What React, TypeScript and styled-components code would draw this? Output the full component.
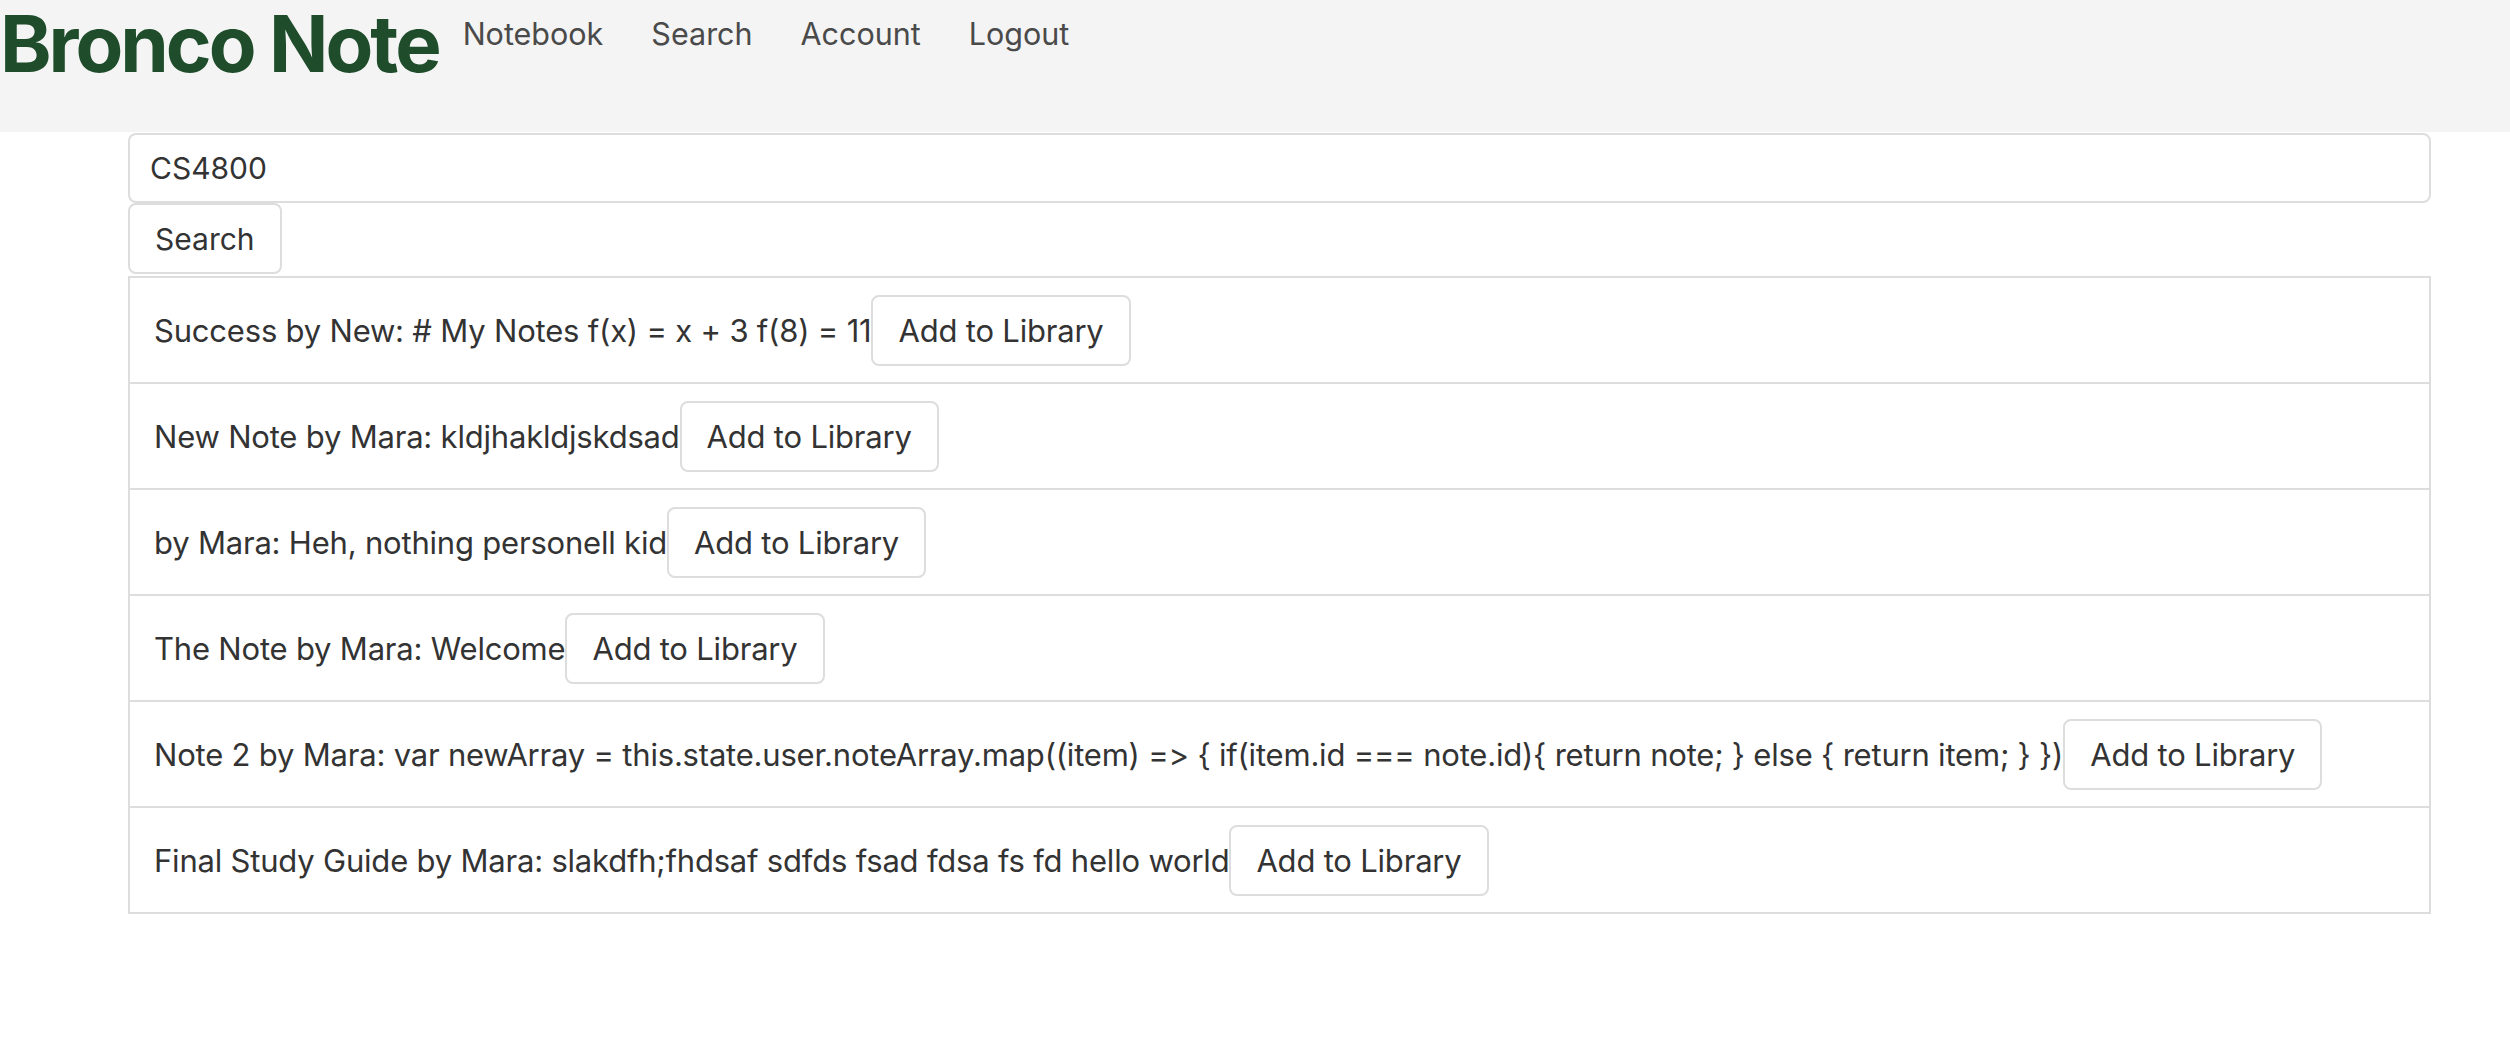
import React from "react";
import styled, { createGlobalStyle } from "styled-components";

const GlobalStyle = createGlobalStyle`
  html, body { margin: 0; padding: 0; background: #ffffff; }
  body {
    font-family: Inter, "Noto Sans", "Liberation Sans", sans-serif;
    font-feature-settings: "calt" 0, "liga" 0;
    font-variant-ligatures: none;
    color: #333333;
  }
  * { box-sizing: border-box; }
`;

const Header = styled.header`
  display: flex;
  align-items: flex-start;
  height: 132px;
  background: #f4f4f4;
`;

const Brand = styled.h1`
  margin: 0;
  padding-top: 2px;
  font-size: 78px;
  line-height: 84px;
  font-weight: 700;
  letter-spacing: -3px;
  color: #1f4d2c;
  white-space: nowrap;
`;

const Nav = styled.nav`
  display: flex;
  gap: 48px;
  padding-left: 24px;
  padding-top: 14px;
`;

const NavLink = styled.a`
  font-size: 30.5px;
  line-height: 40px;
  color: #4a4a4a;
  text-decoration: none;
  cursor: pointer;
`;

const Main = styled.main`
  display: flex;
  flex-direction: column;
  align-items: flex-start;
  padding: 1px 79px 0 128px;
`;

const SearchInput = styled.input`
  width: 100%;
  height: 70px;
  padding: 0 20px;
  border: 2px solid #dddddd;
  border-radius: 8px;
  font-family: inherit;
  font-feature-settings: inherit;
  font-size: 30px;
  color: #333333;
  background: #ffffff;
  outline: none;
`;

const Button = styled.button<{ $wide?: boolean }>`
  flex-shrink: 0;
  height: 71px;
  padding: 0 25px;
  border: 2px solid #dddddd;
  border-radius: 8px;
  background: #ffffff;
  font-family: inherit;
  font-feature-settings: inherit;
  font-size: ${(p) => (p.$wide ? 31 : 30)}px;
  letter-spacing: ${(p) => (p.$wide ? -0.2 : 0)}px;
  color: #333333;
  cursor: pointer;
`;

const ResultList = styled.ul`
  width: 100%;
  margin: 2px 0 0;
  padding: 0;
  list-style: none;
  border: 2px solid #dddddd;
  border-bottom: none;
`;

const ResultRow = styled.li`
  display: flex;
  align-items: center;
  height: 106px;
  padding: 0 24px;
  border-bottom: 2px solid #dddddd;
  font-size: 31px;
  letter-spacing: -0.2px;
`;

const NoteText = styled.span`
  white-space: nowrap;
`;

const results = [
  "Success by New: # My Notes f(x) = x + 3 f(8) = 11",
  "New Note by Mara: kldjhakldjskdsad",
  "by Mara: Heh, nothing personell kid",
  "The Note by Mara: Welcome",
  "Note 2 by Mara: var newArray = this.state.user.noteArray.map((item) => { if(item.id === note.id){ return note; } else { return item; } })",
  "Final Study Guide by Mara: slakdfh;fhdsaf sdfds fsad fdsa fs fd hello world",
];

export default function App() {
  return (
    <>
      <GlobalStyle />
      <Header>
        <Brand>Bronco Note</Brand>
        <Nav>
          <NavLink>Notebook</NavLink>
          <NavLink>Search</NavLink>
          <NavLink>Account</NavLink>
          <NavLink>Logout</NavLink>
        </Nav>
      </Header>
      <Main>
        <SearchInput defaultValue="CS4800" />
        <Button>Search</Button>
        <ResultList>
          {results.map((r) => (
            <ResultRow key={r}>
              <NoteText>{r}</NoteText>
              <Button $wide>Add to Library</Button>
            </ResultRow>
          ))}
        </ResultList>
      </Main>
    </>
  );
}
